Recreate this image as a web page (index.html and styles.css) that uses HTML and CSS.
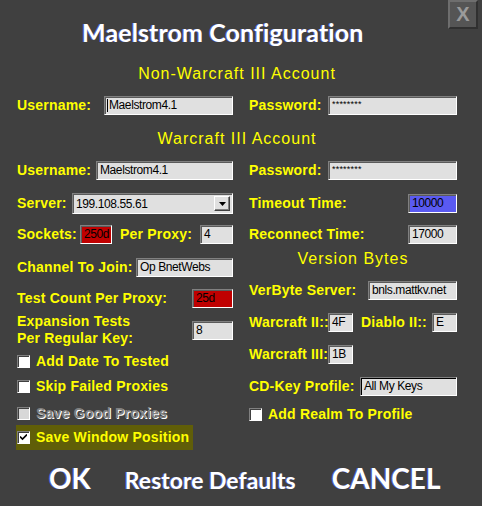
FILE: index.html
```html
<!DOCTYPE html>
<html>
<head>
<meta charset="utf-8">
<title>Maelstrom Configuration</title>
<link rel="stylesheet" href="styles.css">
</head>
<body>
<div class="window">
  <header class="header">
    <h1 class="title">Maelstrom Configuration</h1>
    <div class="close">X</div>
  </header>

  <h2 class="heading h-nonwc3">Non-Warcraft III Account</h2>
  <div class="pair row-1">
    <div class="col-left field">
      <span class="label">Username:</span>
      <div class="input push w-129"><span class="caret"></span>Maelstrom4.1</div>
    </div>
    <div class="col-right field">
      <span class="label">Password:</span>
      <div class="input push w-129 pw">********</div>
    </div>
  </div>

  <h2 class="heading h-wc3">Warcraft III Account</h2>
  <div class="pair row-2">
    <div class="col-left field">
      <span class="label">Username:</span>
      <div class="input push w-137">Maelstrom4.1</div>
    </div>
    <div class="col-right field">
      <span class="label">Password:</span>
      <div class="input push w-129 pw">********</div>
    </div>
  </div>
  <div class="pair row-3">
    <div class="col-left field">
      <span class="label">Server:</span>
      <div class="combo push">
        <span class="combo-text">199.108.55.61</span>
        <span class="combo-btn"><svg width="7" height="4" viewBox="0 0 7 4"><path d="M0 0H7L3.5 4Z" fill="#000"/></svg></span>
      </div>
    </div>
    <div class="col-right field">
      <span class="label">Timeout Time:</span>
      <div class="input push w-49 blue">10000</div>
    </div>
  </div>
  <div class="pair row-4">
    <div class="col-left field">
      <span class="label lw-63">Sockets:</span>
      <div class="input w-32 red">250d</div>
      <span class="label ml-8">Per Proxy:</span>
      <div class="input push w-33">4</div>
    </div>
    <div class="col-right field">
      <span class="label">Reconnect Time:</span>
      <div class="input push w-49">17000</div>
    </div>
  </div>

  <div class="pair columns">
    <div class="col-left stack">
      <div class="field r-channel">
        <span class="label">Channel To Join:</span>
        <div class="input push w-97">Op BnetWebs</div>
      </div>
      <div class="field r-testcount">
        <span class="label">Test Count Per Proxy:</span>
        <div class="input push w-41 red">25d</div>
      </div>
      <div class="field r-expansion">
        <span class="label two-line">Expansion Tests<br>Per Regular Key:</span>
        <div class="input push w-41">8</div>
      </div>
      <div class="check r-adddate">
        <span class="box"></span>
        <span class="label">Add Date To Tested</span>
      </div>
      <div class="check r-skip">
        <span class="box"></span>
        <span class="label">Skip Failed Proxies</span>
      </div>
      <div class="check r-savegood disabled">
        <span class="box"></span>
        <span class="label">Save Good Proxies</span>
      </div>
      <div class="check r-savewin focused">
        <span class="box"><svg width="7" height="7" viewBox="0 0 7 7"><path d="M0 2.5L2.5 5L7 0.5" fill="none" stroke="#000" stroke-width="1.6"/></svg></span>
        <span class="label">Save Window Position</span>
      </div>
    </div>

    <div class="col-right stack">
      <h2 class="heading h-version">Version Bytes</h2>
      <div class="field r-verbyte">
        <span class="label">VerByte Server:</span>
        <div class="input push w-89">bnls.mattkv.net</div>
      </div>
      <div class="field r-wc2">
        <span class="label lw-79">Warcraft II::</span>
        <div class="input w-25">4F</div>
        <span class="label ml-8">Diablo II::</span>
        <div class="input push w-25">E</div>
      </div>
      <div class="field r-wc3">
        <span class="label lw-79">Warcraft III:</span>
        <div class="input w-25">1B</div>
      </div>
      <div class="field r-cdkey">
        <span class="label">CD-Key Profile:</span>
        <div class="input push w-97 active">All My Keys</div>
      </div>
      <div class="check r-realm">
        <span class="box"></span>
        <span class="label">Add Realm To Profile</span>
      </div>
    </div>
  </div>

  <div class="buttons">
    <span class="btn btn-big">OK</span>
    <span class="btn btn-small">Restore Defaults</span>
    <span class="btn btn-big btn-cancel">CANCEL</span>
  </div>
</div>
</body>
</html>
```

FILE: styles.css
```css
html, body {
  margin: 0;
  padding: 0;
  background: #404040;
}

.window {
  width: 482px;
  height: 506px;
  box-sizing: border-box;
  padding: 0 25px 0 17px;
  overflow: hidden;
  font-family: "Liberation Sans", Arial, sans-serif;
}

/* header */
.header {
  display: flex;
  align-items: flex-start;
  height: 54px;
}

.title {
  margin: 17px 0 0 65px;
  font-family: Lato, "DejaVu Sans", sans-serif;
  font-weight: 700;
  font-size: 25px;
  line-height: 30px;
  color: #ffffff;
  letter-spacing: 0.1px;
  text-shadow: -1px 0 0 rgba(90, 110, 255, 0.75);
}

.close {
  margin-left: auto;
  margin-right: -21px;
  width: 30px;
  height: 29px;
  box-sizing: border-box;
  background: #555555;
  border: 2px solid;
  border-color: #6e6e6e #303030 #303030 #6e6e6e;
  color: #9a9a9a;
  font-weight: 700;
  font-size: 20px;
  line-height: 25px;
  text-align: center;
}

/* section headings */
.heading {
  margin: 0;
  font-weight: 400;
  font-size: 16px;
  letter-spacing: 1px;
  color: #ffff00;
  text-align: center;
  height: 19px;
  line-height: 19px;
}

.h-nonwc3 { margin-top: 10px; }
.h-wc3 { margin-top: 14px; }

/* two column rows */
.pair {
  display: flex;
  gap: 16px;
}

.col-left { width: 216px; }
.col-right { width: 208px; }

.field {
  display: flex;
  align-items: center;
  height: 19px;
}

.row-1 { margin-top: 13px; }
.row-2 { margin-top: 13px; }
.row-3 { margin-top: 13px; }
.row-3 .field { height: 21px; }
.row-4 { margin-top: 11px; }

.label {
  font-weight: 700;
  font-size: 14px;
  line-height: 17px;
  letter-spacing: 0.2px;
  color: #ffff00;
  white-space: nowrap;
}

.two-line { line-height: 17px; }

.lw-63 { width: 63px; }
.lw-79 { width: 79px; }
.ml-8 { margin-left: 8px; }

.push { margin-left: auto; }

/* inputs */
.input {
  box-sizing: border-box;
  height: 19px;
  background: #e0e0e0;
  border: 1px solid;
  border-color: #808080 #ffffff #ffffff #808080;
  box-shadow: inset 1px 1px 0 #5a5a5a;
  padding-left: 3px;
  font-size: 12px;
  letter-spacing: -0.4px;
  line-height: 17px;
  color: #000000;
  white-space: nowrap;
  overflow: hidden;
  display: flex;
  align-items: center;
}

.caret {
  display: inline-block;
  width: 1px;
  height: 13px;
  background: #000;
  margin-right: 1px;
  margin-left: -1px;
}

.pw {
  align-items: flex-start;
  font-size: 9px;
  letter-spacing: 0.2px;
  line-height: 10px;
  padding-top: 2px;
}

.red { background: #c00000; }
.blue { background: #5a5af2; }

.active {
  box-shadow: inset 1px 1px 0 #000000;
}

.w-25 { width: 25px; }
.w-32 { width: 32px; }
.w-33 { width: 33px; }
.w-41 { width: 41px; }
.w-49 { width: 49px; }
.w-89 { width: 89px; }
.w-97 { width: 97px; }
.w-129 { width: 129px; }
.w-137 { width: 137px; }

/* combo */
.combo {
  box-sizing: border-box;
  width: 161px;
  height: 21px;
  background: #e0e0e0;
  border: 1px solid;
  border-color: #808080 #ffffff #ffffff #808080;
  box-shadow: inset 1px 1px 0 #5a5a5a;
  display: flex;
  align-items: center;
  padding: 0 2px 0 3px;
}

.combo-text {
  font-size: 12px;
  letter-spacing: -0.4px;
  color: #000;
}

.combo-btn {
  margin-left: auto;
  box-sizing: border-box;
  width: 16px;
  height: 15px;
  background: #e0e0e0;
  border: 1px solid;
  border-color: #ffffff #404040 #404040 #ffffff;
  box-shadow: inset -1px -1px 0 #808080;
  display: flex;
  align-items: center;
  justify-content: center;
}

/* lower columns */
.stack {
  display: flex;
  flex-direction: column;
}

.r-channel { margin-top: 14px; }
.r-testcount { margin-top: 12px; }
.r-expansion { margin-top: 5px; height: 34px; }

.check {
  display: flex;
  align-items: center;
  gap: 6px;
  height: 18px;
}

.box {
  box-sizing: border-box;
  width: 13px;
  height: 13px;
  background: #ffffff;
  border: 1px solid;
  border-color: #808080 #ffffff #ffffff #808080;
  box-shadow: inset 1px 1px 0 #404040;
  display: flex;
  align-items: center;
  justify-content: center;
  flex: none;
}

.r-adddate { margin-top: 5px; }
.r-skip { margin-top: 7px; }
.r-savegood { margin-top: 9px; }
.r-savewin {
  margin-top: 3px;
  height: 25px;
  width: 177px;
  margin-left: -1px;
  padding-left: 1px;
  box-sizing: border-box;
  background: #605e08;
}

.disabled .box { background: #d8d8d8; }
.disabled .label {
  color: #808080;
  text-shadow: 1px 1px 0 #ffffff;
}

.h-version { margin-top: 6px; height: 18px; line-height: 18px; }
.r-verbyte { margin-top: 13px; }
.r-wc2 { margin-top: 13px; }
.r-wc3 { margin-top: 13px; }
.r-cdkey { margin-top: 13px; }
.r-realm { margin-top: 9px; }

/* bottom buttons */
.buttons {
  display: flex;
  align-items: baseline;
  margin-top: 8px;
  padding-left: 32px;
  height: 40px;
  font-family: Lato, "DejaVu Sans", sans-serif;
  font-weight: 700;
  color: #ffffff;
}

.btn {
  text-shadow: -1px 0 0 rgba(90, 110, 255, 0.75);
  white-space: nowrap;
}

.btn-big { font-size: 28px; line-height: 40px; }
.btn-small { font-size: 23px; margin-left: 34px; }
.btn-cancel { margin-left: 36px; }
```
